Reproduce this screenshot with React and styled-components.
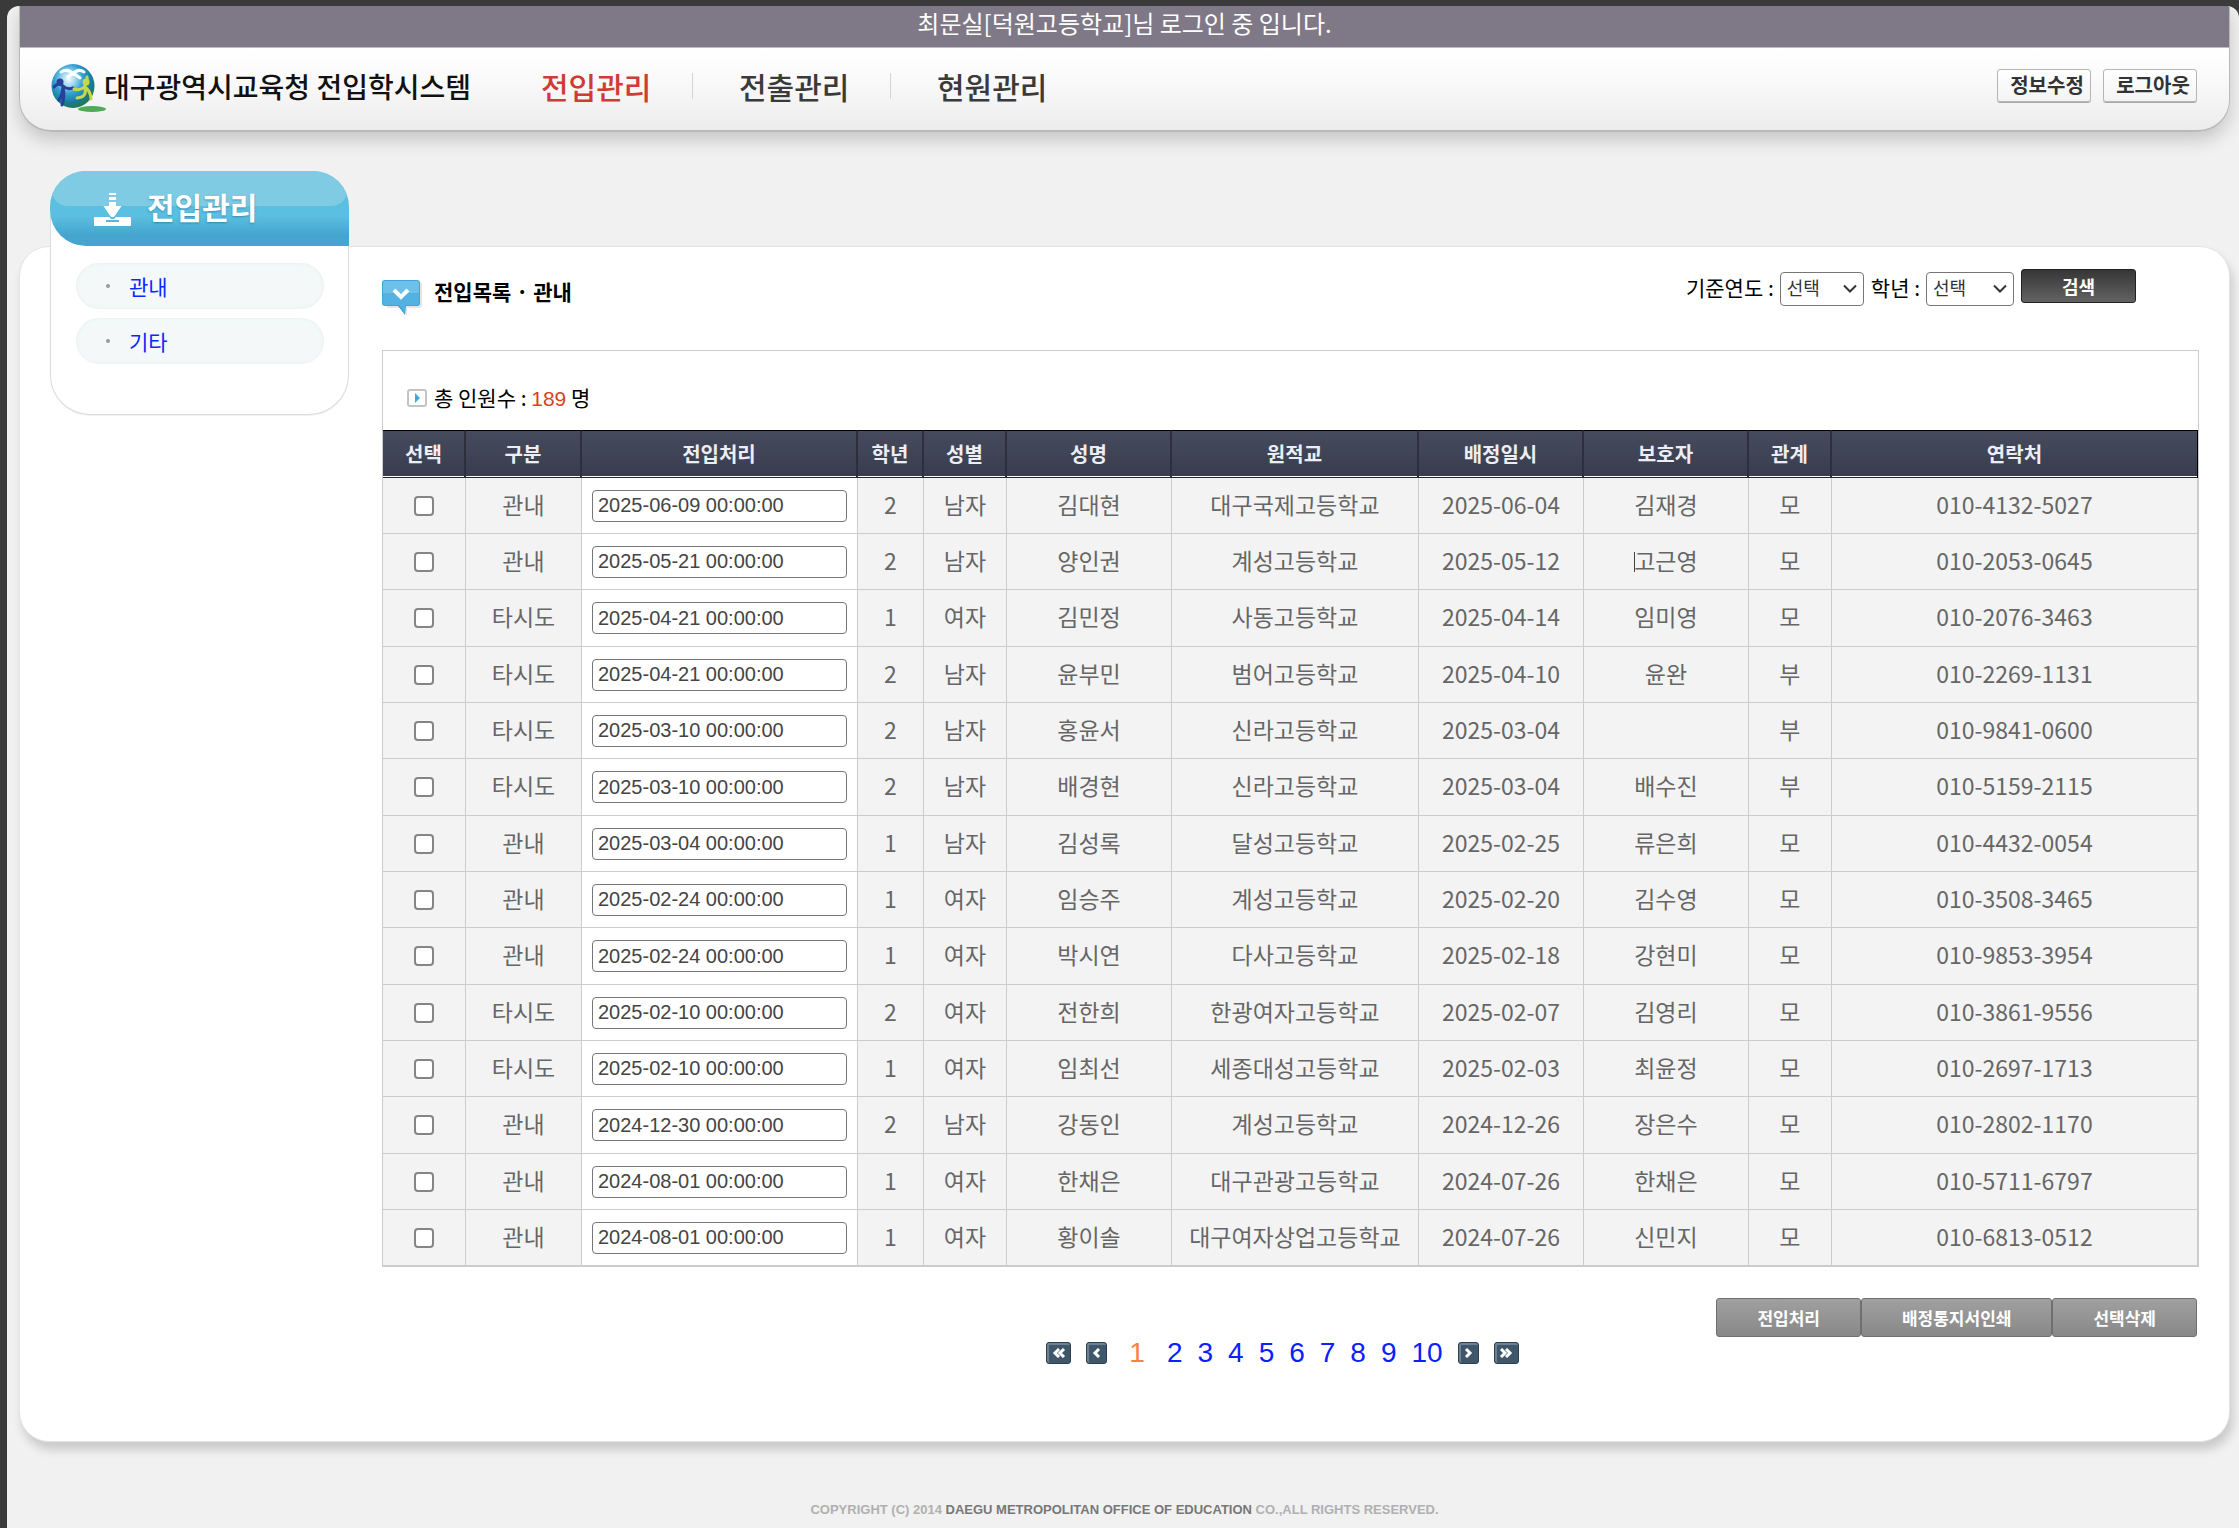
import React from "react";
import styled, { createGlobalStyle, css } from "styled-components";

const KR = `"Noto Sans CJK KR", "Liberation Sans", sans-serif`;
const LATIN = `"Liberation Sans", "Noto Sans CJK KR", sans-serif`;

const GlobalStyle = createGlobalStyle`
  *, *::before, *::after { box-sizing: border-box; }
  html, body, #root { min-height: 100vh; }
  body {
    margin: 0;
    background: #3a3a3a;
    font-family: ${KR};
    font-size: 20px;
    color: #000;
  }
  button, input, select { font-family: inherit; }
  a { text-decoration: none; }
`;

const Frame = styled.div`
  min-height: 100vh;
  padding: 6px 0 0 7px;
  background: #3a3a3a;
`;

const Page = styled.div`
  min-height: calc(100vh - 6px);
  padding: 0 9px 0 12px;
  background: #f1f1f1;
  border-radius: 12px 12px 0 0;
  overflow: hidden;
`;

const Header = styled.header`
  border-radius: 0 0 32px 32px;
  border: solid #b9b9b9;
  border-width: 0 1px 2px;
  overflow: hidden;
  background: linear-gradient(#f9f9f9, #ffffff 30%, #fbfbfb 55%, #ececec);
  box-shadow: 0 8px 18px rgba(0, 0, 0, 0.18);
`;

const LoginBar = styled.p`
  margin: 0;
  height: 42px;
  line-height: 34px;
  background: #7f7987;
  border-bottom: 1px solid #bdb9c6;
  color: #fff;
  font-size: 24px;
  text-align: center;
`;

const HeaderRow = styled.div`
  display: flex;
  align-items: center;
  height: 82px;
  padding: 0 32px 7px 31px;
`;

const Brand = styled.a`
  display: flex;
  align-items: center;
  width: 490px;
  color: #111;
  font-size: 28px;
  font-weight: 500;
  line-height: 40px;
  white-space: nowrap;

  svg { flex: none; margin: 5px -3px 0 0; }
`;

const Menu = styled.nav`
  display: flex;
  flex: 1;
`;

const MenuLink = styled.a`
  width: 198px;
  color: ${(p) => (p.$active ? "#cf3b35" : "#3a3a3a")};
  font-size: 30px;
  font-weight: 500;
  line-height: 40px;
  display: flex;
  align-items: center;

  &:not(:last-child)::after {
    content: "";
    width: 1px;
    height: 26px;
    margin-left: auto;
    margin-right: 46px;
    background: #d4d4d4;
  }
`;

const UserButtons = styled.div`
  display: flex;
  gap: 12px;
`;

const UserButton = styled.button`
  width: 94px;
  height: 33px;
  padding: 0 0 1px 6px;
  border: 1px solid #b5b5b5;
  border-radius: 3px;
  background: linear-gradient(#fff, #f4f4f4);
  box-shadow: 0 1px 0 #aaa;
  color: #333;
  font-size: 20px;
  font-weight: 700;
  line-height: 28px;
  white-space: nowrap;
`;

const Body = styled.div`
  display: grid;
  grid-template-columns: 300px minmax(0, 1fr);
  grid-template-rows: 114px auto;
`;

const Panel = styled.div`
  grid-column: 1 / -1;
  grid-row: 2;
  background: #fff;
  border-radius: 30px;
  border: 1px solid #e4e4e4;
  box-shadow: 3px 8px 10px rgba(0, 0, 0, 0.16);
`;

const Side = styled.aside`
  grid-column: 1;
  grid-row: 1 / span 2;
  align-self: start;
  z-index: 1;
  margin: 39px 0 0 31px;
  width: 299px;
  border: 1px solid #dcdcdc;
  border-top: 0;
  border-radius: 36px 36px 40px 40px;
  background: #fff;
  box-shadow: 0 1px 1px rgba(0, 0, 0, 0.06);
`;

const SideTitle = styled.h2`
  display: flex;
  align-items: center;
  gap: 16px;
  height: 75px;
  margin: 0 -1px 17px;
  padding: 0 0 6px 44px;
  border-radius: 36px 36px 0 36px;
  background: linear-gradient(#5cc0e0, #5abfe0 60%, #46a5cf 85%, #46a5cf);
  position: relative;
  overflow: hidden;
  color: #fff;
  font-size: 30px;
  font-weight: 700;
  line-height: 40px;
  text-shadow: 0 1px 2px rgba(20, 90, 130, 0.5);

  &::before {
    content: "";
    position: absolute;
    inset: 0 2px auto;
    height: 35px;
    border-radius: 36px 36px 28px 28px;
    background: #7ecbe3;
  }

  > * { position: relative; }
  svg { margin-top: 7px; }
`;

const SideList = styled.ul`
  display: grid;
  gap: 9px;
  margin: 0;
  padding: 0 24px 50px 25px;
  list-style: none;
`;

const SideLink = styled.a`
  display: flex;
  align-items: center;
  gap: 19px;
  height: 46px;
  padding: 0 0 0 30px;
  border-radius: 23px;
  background: #f4f8f9;
  box-shadow: inset 0 0 4px #e6eeee;
  color: #0a28ff;
  font-size: 21px;
  line-height: 30px;

  &::before {
    content: "";
    width: 4px;
    height: 4px;
    border-radius: 2px;
    background: #999;
  }
`;

const Main = styled.main`
  padding: 21px 30px 72px 362px;
`;

const TitleRow = styled.div`
  display: flex;
  align-items: flex-start;
  justify-content: space-between;
  height: 82px;
`;

const PageTitle = styled.h1`
  display: flex;
  align-items: center;
  gap: 12px;
  margin: 0;
  font-size: 21px;
  font-weight: 700;
  line-height: 34px;

  svg { margin: 12px 0 -3px; }
`;

const Filters = styled.form`
  display: flex;
  align-items: center;
  gap: 7px;
  padding-right: 63px;
`;

const Field = styled.label`
  display: flex;
  align-items: center;
  gap: 6px;
  font-size: 21px;
  line-height: 34px;
  white-space: nowrap;
`;

const Picker = styled.select`
  width: ${(p) => p.$width}px;
  height: 34px;
  margin-top: 4px;
  padding: 0 6px 4px;
  border: 1px solid #767676;
  border-radius: 4px;
  appearance: none;
  background: #fff
    url("data:image/svg+xml,%3Csvg xmlns='http://www.w3.org/2000/svg' width='16' height='10' fill='none' stroke='%23333' stroke-width='2'%3E%3Cpath d='M2 1.500l6 6 6-6'/%3E%3C/svg%3E")
    no-repeat right 5px center;
  color: #333;
  font-size: 18px;
`;

const SearchButton = styled.button`
  width: 115px;
  height: 34px;
  margin-bottom: 2px;
  padding: 0 0 1px;
  border: 1px solid #222;
  border-radius: 3px;
  background: linear-gradient(#363636, #636363);
  color: #fff;
  font-size: 18px;
  font-weight: 700;
`;

const ListBox = styled.section`
  border: 1px solid #ccc;
`;

const Total = styled.p`
  display: flex;
  align-items: center;
  gap: 7px;
  height: 79px;
  margin: 0;
  padding: 15px 0 0 24px;
  font-size: 21px;
  line-height: 30px;

  strong { color: #d9431f; font-weight: 400; font-family: ${LATIN}; }
`;

const Table = styled.table`
  width: 100%;
  table-layout: fixed;
  border-collapse: separate;
  border-spacing: 0;
`;

const Th = styled.th`
  height: 48px;
  padding: 0;
  border-top: 1px solid #000;
  border-right: 2px solid #2c303c;
  border-bottom: 1px solid #22242e;
  box-shadow: inset 0 -1px 0 #fff;
  background: linear-gradient(#454b5d, #383c4e);
  color: #eceef3;
  font-size: 20px;
  font-weight: 700;
  line-height: 30px;

  &:last-child { border-right: 1px solid #000; }
`;

const Row = styled.tr`
  height: 56px;

  &:nth-child(3n) { height: 57px; }
`;

const Td = styled.td`
  padding: 0 7px 4px;
  border-right: 1px solid #ccc;
  border-bottom: 1px solid #ccc;
  background: #f3f3f3;
  color: #666;
  font-size: 23px;
  line-height: 32px;
  text-align: center;
  white-space: nowrap;
`;

const ControlTd = styled(Td)`
  padding: 0 7px;
  background: ${(p) => (p.$plain ? "#fff" : "#f3f3f3")};
`;

const Check = styled.input`
  appearance: none;
  display: block;
  width: 20px;
  height: 20px;
  margin: 0 auto;
  border: 2px solid #858585;
  border-radius: 4px;
  background: #fff;

  &:checked { background: #46a5cf; }
`;

const DateInput = styled.input`
  display: block;
  width: calc(100% - 6px);
  height: 32px;
  margin: 0 3px;
  padding: 0 5px;
  border: 1px solid #767676;
  border-radius: 4px;
  background: #fff;
  color: #444;
  font-family: ${LATIN};
  font-size: 20px;
`;

const Caret = styled.span`
  display: inline-block;
  width: 1px;
  height: 20px;
  margin-right: -1px;
  vertical-align: -2px;
  background: #444;
`;

const Actions = styled.div`
  display: flex;
  justify-content: flex-end;
  margin: 31px 2px 0 0;
`;

const ActionButton = styled.button`
  height: 39px;
  padding: 0 40px 1px;
  border: 1px solid #6f6f6f;
  border-radius: 3px;
  background: linear-gradient(#a0a0a0, #888);
  color: #fff;
  font-size: 17px;
  font-weight: 700;
`;

const Pager = styled.nav`
  display: flex;
  align-items: center;
  justify-content: center;
  gap: 15px;
  margin-right: 16px;
  line-height: 32px;
  font-family: ${LATIN};
  font-size: 28px;
`;

const pageText = css`
  color: ${(p) => (p.$current ? "#ff7f3f" : "#0a20ff")};
  padding: 0 ${(p) => (p.$current ? "7px" : "0")};
`;

const PageLink = styled.a`
  ${pageText}
`;

const PageStep = styled.button`
  display: flex;
  align-items: center;
  justify-content: center;
  width: ${(p) => (p.$wide ? 25 : 21)}px;
  height: 22px;
  padding: 0;
  border: 1px solid #2c3f50;
  border-radius: 3px;
  background: #40566b;
  box-shadow: inset 1px 1px 0 1px #6d8193;
  color: #fff;
`;

const Footer = styled.footer`
  padding: 57px 0 8px;
  color: #b0b0b0;
  font-family: ${LATIN};
  font-size: 13px;
  font-weight: 700;
  line-height: 22px;
  text-align: center;

  strong { color: #777; }
`;

const Globe = () => (
  <svg width="56" height="50" viewBox="0 0 56 50" aria-hidden="true">
    <defs>
      <radialGradient id="globe" cx="0.4" cy="0.34" r="0.68">
        <stop offset="0" stopColor="#f6fcff" />
        <stop offset="0.22" stopColor="#a4dbf2" />
        <stop offset="0.5" stopColor="#2f9fd0" />
        <stop offset="0.8" stopColor="#1a7799" />
        <stop offset="1" stopColor="#227a4c" />
      </radialGradient>
    </defs>
    <ellipse cx="41" cy="46" rx="14" ry="3" fill="#4fab57" />
    <ellipse cx="22" cy="23" rx="21.500" ry="22" fill="url(#globe)" />
    <g fill="none" strokeLinecap="round">
      <path d="M10 9q7-4 12 2q5-6 11-2M17 14l5-4 7 5" stroke="#fff" strokeWidth="3" />
      <path d="M3 24q4-5 9-1q4 4 10 2M12 24q-1 9-4 13M12 24q2 10-1 18" stroke="#27409a" strokeWidth="3" />
      <path d="M23 26q6 2 10-2q4-5 3-10M34 24q6 5 6 12M34 26q2 8-8 9" stroke="#c3d84a" strokeWidth="3" />
    </g>
    <circle cx="9" cy="19" r="3.500" fill="#27409a" />
    <circle cx="35" cy="19" r="3.500" fill="#c3d84a" />
  </svg>
);

const InboxIcon = () => (
  <svg width="37" height="34" viewBox="0 0 37 34" fill="#fff" aria-hidden="true">
    <path d="M15 1h7v2h-7zM15 5h7v3h-7zM15 10h7v4h5.500L20 25h-3L9.500 14H15z" />
    <path fillRule="evenodd" d="M1 25h14l2 2h3l2-2h14q1 0 1 1v7q0 1-1 1H1q-1 0-1-1v-7q0-1 1-1zM12 28v2h13v-2z" />
  </svg>
);

const TitleIcon = () => (
  <svg width="40" height="37" viewBox="0 0 40 37" aria-hidden="true">
    <path d="M5 2h32q3 0 3 3v20q0 3-3 3H25v8l-7-8H5z" fill="#000" opacity="0.1" />
    <path d="M3 0h32q3 0 3 3v20q0 3-3 3H24l-1 9-7-9H3q-3 0-3-3V3q0-3 3-3z" fill="#3fa6d3" />
    <path d="M3 1h32q2 0 2 2v10H1V3q0-2 2-2z" fill="#6cc0ea" />
    <path d="M1 13h36v10q0 2-2 2h-12v7l-6-7H3q-2 0-2-2z" fill="#54b2e3" />
    <path d="M12 10l7 7 7-7" fill="none" stroke="#fff" strokeWidth="4" />
  </svg>
);

const TotalIcon = () => (
  <svg width="20" height="18" viewBox="0 0 20 18" aria-hidden="true">
    <rect x="1" y="1" width="18" height="16" rx="2" fill="#fff" stroke="#c4c4c4" strokeWidth="2" />
    <path d="M8 4l5 5-5 5z" fill="#3fa9dc" />
  </svg>
);

const Chevron = ({ dir, twice }) => (
  <svg width="15" height="10" viewBox="0 0 15 10" fill="none" stroke="#fff" strokeWidth="3" aria-hidden="true">
    <g transform={dir === "right" ? "rotate(180 7.500 5)" : undefined}>
      {twice ? <path d="M8 1L4 5l4 4M13 1L9 5l4 4" /> : <path d="M10 1L6 5l4 4" />}
    </g>
  </svg>
);

const columns = [
  ["선택", 83], ["구분", 116], ["전입처리", 276], ["학년", 66], ["성별", 83], ["성명", 165],
  ["원적교", 247], ["배정일시", 165], ["보호자", 165], ["관계", 83], ["연락처", 366],
];
const totalWidth = columns.reduce((sum, [, w]) => sum + w, 0);

const students = [
  ["관내", "2025-06-09", "2", "남자", "김대현", "대구국제고등학교", "2025-06-04", "김재경", "모", "010-4132-5027"],
  ["관내", "2025-05-21", "2", "남자", "양인권", "계성고등학교", "2025-05-12", "고근영", "모", "010-2053-0645"],
  ["타시도", "2025-04-21", "1", "여자", "김민정", "사동고등학교", "2025-04-14", "임미영", "모", "010-2076-3463"],
  ["타시도", "2025-04-21", "2", "남자", "윤부민", "범어고등학교", "2025-04-10", "윤완", "부", "010-2269-1131"],
  ["타시도", "2025-03-10", "2", "남자", "홍윤서", "신라고등학교", "2025-03-04", "", "부", "010-9841-0600"],
  ["타시도", "2025-03-10", "2", "남자", "배경현", "신라고등학교", "2025-03-04", "배수진", "부", "010-5159-2115"],
  ["관내", "2025-03-04", "1", "남자", "김성록", "달성고등학교", "2025-02-25", "류은희", "모", "010-4432-0054"],
  ["관내", "2025-02-24", "1", "여자", "임승주", "계성고등학교", "2025-02-20", "김수영", "모", "010-3508-3465"],
  ["관내", "2025-02-24", "1", "여자", "박시연", "다사고등학교", "2025-02-18", "강현미", "모", "010-9853-3954"],
  ["타시도", "2025-02-10", "2", "여자", "전한희", "한광여자고등학교", "2025-02-07", "김영리", "모", "010-3861-9556"],
  ["타시도", "2025-02-10", "1", "여자", "임최선", "세종대성고등학교", "2025-02-03", "최윤정", "모", "010-2697-1713"],
  ["관내", "2024-12-30", "2", "남자", "강동인", "계성고등학교", "2024-12-26", "장은수", "모", "010-2802-1170"],
  ["관내", "2024-08-01", "1", "여자", "한채은", "대구관광고등학교", "2024-07-26", "한채은", "모", "010-5711-6797"],
  ["관내", "2024-08-01", "1", "여자", "황이솔", "대구여자상업고등학교", "2024-07-26", "신민지", "모", "010-6813-0512"],
];

const StudentRow = ({ data, caret }) => {
  const [kind, moved, grade, sex, name, school, assigned, guardian, relation, phone] = data;
  return (
    <Row>
      <ControlTd><Check type="checkbox" aria-label={`${name} 선택`} /></ControlTd>
      <Td>{kind}</Td>
      <ControlTd $plain>
        <DateInput aria-label={`${name} 전입처리`} defaultValue={`${moved} 00:00:00`} />
      </ControlTd>
      <Td>{grade}</Td>
      <Td>{sex}</Td>
      <Td>{name}</Td>
      <Td>{school}</Td>
      <Td>{assigned}</Td>
      <Td>{caret && <Caret />}{guardian}</Td>
      <Td>{relation}</Td>
      <Td>{phone}</Td>
    </Row>
  );
};

export default function App() {
  return (
    <Frame>
      <GlobalStyle />
      <Page>
        <Header>
          <LoginBar>최문실[덕원고등학교]님 로그인 중 입니다.</LoginBar>
          <HeaderRow>
            <Brand href="#"><Globe />대구광역시교육청 전입학시스템</Brand>
            <Menu>
              <MenuLink href="#" $active>전입관리</MenuLink>
              <MenuLink href="#">전출관리</MenuLink>
              <MenuLink href="#">현원관리</MenuLink>
            </Menu>
            <UserButtons>
              <UserButton type="button">정보수정</UserButton>
              <UserButton type="button">로그아웃</UserButton>
            </UserButtons>
          </HeaderRow>
        </Header>

        <Body>
          <Side>
            <SideTitle><InboxIcon /><span>전입관리</span></SideTitle>
            <SideList>
              <li><SideLink href="#">관내</SideLink></li>
              <li><SideLink href="#">기타</SideLink></li>
            </SideList>
          </Side>

          <Panel>
            <Main>
              <TitleRow>
                <PageTitle><TitleIcon />전입목록 · 관내</PageTitle>
                <Filters>
                  <Field>
                    기준연도 :
                    <Picker $width={84}><option>선택</option></Picker>
                  </Field>
                  <Field>
                    학년 :
                    <Picker $width={88}><option>선택</option></Picker>
                  </Field>
                  <SearchButton type="button">검색</SearchButton>
                </Filters>
              </TitleRow>

              <ListBox>
                <Total>
                  <TotalIcon />
                  <span>총 인원수 : <strong>189</strong> 명</span>
                </Total>
                <Table>
                  <colgroup>
                    {columns.map(([label, w]) => (
                      <col key={label} style={{ width: `${(w / totalWidth) * 100}%` }} />
                    ))}
                  </colgroup>
                  <thead>
                    <tr>{columns.map(([label]) => <Th key={label} scope="col">{label}</Th>)}</tr>
                  </thead>
                  <tbody>
                    {students.map((data, i) => (
                      <StudentRow key={data[9]} data={data} caret={i === 1} />
                    ))}
                  </tbody>
                </Table>
              </ListBox>

              <Actions>
                <ActionButton type="button">전입처리</ActionButton>
                <ActionButton type="button">배정통지서인쇄</ActionButton>
                <ActionButton type="button">선택삭제</ActionButton>
              </Actions>

              <Pager aria-label="페이지">
                <PageStep type="button" $wide aria-label="처음"><Chevron dir="left" twice /></PageStep>
                <PageStep type="button" aria-label="이전"><Chevron dir="left" /></PageStep>
                {[1, 2, 3, 4, 5, 6, 7, 8, 9, 10].map((n) => (
                  <PageLink key={n} href="#" $current={n === 1}>{n}</PageLink>
                ))}
                <PageStep type="button" aria-label="다음"><Chevron dir="right" /></PageStep>
                <PageStep type="button" $wide aria-label="마지막"><Chevron dir="right" twice /></PageStep>
              </Pager>
            </Main>
          </Panel>
        </Body>

        <Footer>
          COPYRIGHT (C) 2014 <strong>DAEGU METROPOLITAN OFFICE OF EDUCATION</strong> CO.,ALL RIGHTS RESERVED.
        </Footer>
      </Page>
    </Frame>
  );
}
